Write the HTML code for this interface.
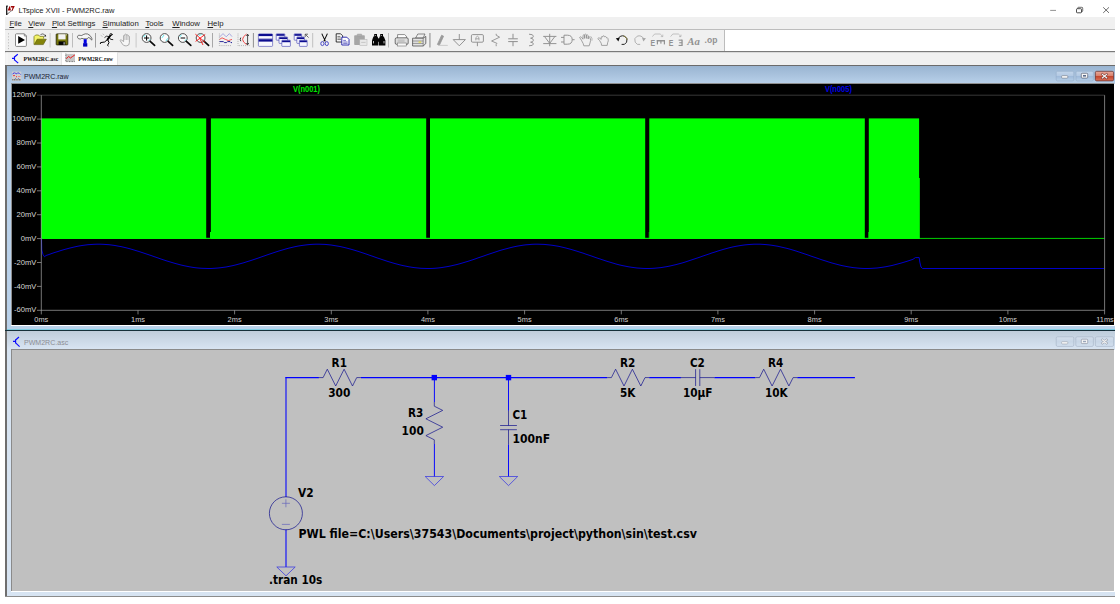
<!DOCTYPE html>
<html>
<head>
<meta charset="utf-8">
<title>LTspice XVII - PWM2RC.raw</title>
<style>
html,body{margin:0;padding:0;}
body{width:1120px;height:604px;background:#fff;position:relative;overflow:hidden;font-family:"Liberation Sans",sans-serif;}
.abs{position:absolute;}
.t{position:absolute;white-space:nowrap;line-height:1;}
#titlebar{left:0;top:0;width:1120px;height:17px;background:#fff;}
#titletext{left:18.5px;top:7px;font-size:7.55px;color:#222;}
#menubar{left:5px;top:17px;width:1110px;height:12px;background:#f0f0f0;}
#menubar span{position:absolute;top:2.8px;font-size:7.75px;color:#222;line-height:1;white-space:nowrap;}
#menubar u{text-decoration:underline;text-underline-offset:0.5px;text-decoration-thickness:0.5px;}
#tbline{left:5px;top:29px;width:1110px;height:1px;background:#bdbdbd;}
#toolbar{left:5px;top:30px;width:719px;height:21px;background:#f0f0f0;}
#tbwhite{left:725px;top:30px;width:390px;height:21px;background:#fff;}
#tbsep{left:724px;top:30px;width:1px;height:21px;background:#bcbcbc;}
#tbbottom{left:5px;top:51px;width:1110px;height:1px;background:#7a7a7a;}
#tbbottom2{left:5px;top:52px;width:1110px;height:1px;background:#d9d9d9;}
#tabbar{left:5px;top:53px;width:1110px;height:12px;background:#f0f0f0;}
#tabline{left:5px;top:65px;width:1110px;height:1px;background:#6b6b6b;}
#mdi{left:5px;top:66px;width:1110px;height:531px;background:#a0a0a0;}
.tabtxt{font-family:"Liberation Mono",monospace;font-size:5.9px;color:#333;}
.sep{position:absolute;top:33px;width:1px;height:15px;background:#b4b4b4;}
</style>
</head>
<body>
<div id="titlebar" class="abs"></div>
<div id="titletext" class="t">LTspice XVII - PWM2RC.raw</div>
<div id="menubar" class="abs">
<span style="left:4.4px"><u>F</u>ile</span>
<span style="left:23.3px"><u>V</u>iew</span>
<span style="left:46.9px"><u>P</u>lot Settings</span>
<span style="left:97.5px"><u>S</u>imulation</span>
<span style="left:140.4px"><u>T</u>ools</span>
<span style="left:167.3px"><u>W</u>indow</span>
<span style="left:202.5px"><u>H</u>elp</span>
</div>
<div id="tbline" class="abs"></div>
<div id="toolbar" class="abs"></div>
<div id="tbsep" class="abs"></div>
<div id="tbwhite" class="abs"></div>
<div id="tbbottom" class="abs"></div>
<div id="tbbottom2" class="abs"></div>
<div id="tabbar" class="abs"></div>
<div id="tabline" class="abs"></div>
<div id="mdi" class="abs"></div>

<!-- ===== Toolbar icons ===== -->
<svg class="abs" style="left:0;top:0" width="1120" height="604" viewBox="0 0 1120 604">
<!-- gripper -->
<g fill="#a8a8a8"><rect x="8" y="33.4" width="0.9" height="0.9"/><rect x="8" y="36.4" width="0.9" height="0.9"/><rect x="8" y="39.4" width="0.9" height="0.9"/><rect x="8" y="42.4" width="0.9" height="0.9"/><rect x="8" y="45.4" width="0.9" height="0.9"/><rect x="8" y="48.2" width="0.9" height="0.9"/></g>
<!-- separators -->
<g>
<rect x="49.6" y="33" width="1" height="14.5" fill="#c6c6c6"/><rect x="72" y="33" width="1" height="14.5" fill="#bdbdbd"/><rect x="95.1" y="33" width="0.9" height="14.5" fill="#969696"/><rect x="135.6" y="33" width="1" height="14.5" fill="#c8c8c8"/><rect x="212" y="33" width="0.9" height="14.5" fill="#a0a0a0"/><rect x="252.9" y="33" width="0.9" height="14.5" fill="#858585"/><rect x="312.2" y="33" width="1" height="14.5" fill="#c0c0c0"/><rect x="388" y="33" width="1" height="14.5" fill="#bcbcbc"/><rect x="429.5" y="33" width="0.9" height="14.5" fill="#7c7c7c"/>
</g>
<!-- run (page + triangle) -->
<path d="M16.4,33.8H24.4L26.4,35.9V45.4Q26.4,46.4 25.4,46.4H16.4Q15.5,46.4 15.5,45.4V34.7Q15.5,33.8 16.4,33.8Z" fill="#fff" stroke="#6a6a6a" stroke-width="0.8"/>
<path d="M24.3,33.9V36H26.3" fill="none" stroke="#555" stroke-width="0.6"/>
<path d="M18.2,36.1L25,39.9L18.2,43.7Z" fill="#000"/>
<!-- open folder -->
<path d="M34,44.4V36.6L35.6,35H38.6L39.8,36.4H43.6V38.6" fill="#f4f46a" stroke="#6b6b10" stroke-width="0.7"/>
<path d="M34.2,44.6L37.2,39.2H46.3L43.3,44.6Z" fill="#84840a" stroke="#55550a" stroke-width="0.6"/>
<path d="M40.5,34.6Q43,32.6 45.2,35.4" fill="none" stroke="#333" stroke-width="0.7"/>
<path d="M44,36.4L46.2,36.6L45.8,34.4Z" fill="#222"/>
<!-- save floppy -->
<rect x="56.2" y="33.9" width="11.6" height="11" rx="0.6" fill="#76760a" stroke="#222204" stroke-width="0.8"/>
<rect x="58.3" y="34.2" width="7.3" height="5.2" fill="#f2f2f2"/>
<rect x="58.6" y="41.4" width="6.8" height="3.5" fill="#050505"/>
<rect x="63.6" y="42.2" width="1" height="2.4" fill="#ddd"/>
<rect x="65.9" y="34.4" width="0.9" height="0.9" fill="#eee"/>
<!-- hammer -->
<path d="M77.6,36.2Q78.2,34.6 80.2,35.4Q81.8,36 83.2,34.6Q85.2,33.4 87.6,34Q90.4,35 91.8,38.2Q92.2,39.4 91.6,40.2Q90.6,37.8 88.4,37.4L87.4,38.8H83L82,38.2Q80.2,39.6 78.6,38.8Q77.2,37.8 77.6,36.2Z" fill="#f6f6f6" stroke="#3a3a3a" stroke-width="0.7"/>
<rect x="83.7" y="39.2" width="3" height="4.4" fill="#0000e8"/>
<rect x="83.1" y="43.2" width="4.2" height="3.4" fill="#0000c0"/>
<!-- running man -->
<g stroke="#000" fill="none" stroke-linecap="round">
<circle cx="111" cy="34.6" r="1.1" stroke-width="0.8"/>
<path d="M110.2,35.8L107.6,39.4" stroke-width="1.9"/>
<path d="M107.8,39.2L104.6,42L100.6,42.6L100.4,43.6" stroke-width="1"/>
<path d="M107.8,39.8L109,42.6L107.6,45.2L108.2,46" stroke-width="1"/>
<path d="M109.6,36.6L106.4,36.2L104.8,37.4" stroke-width="0.8"/>
<path d="M109.4,37.4L110.6,39.4L112.8,39.6" stroke-width="0.8"/>
</g>
<path d="M100.6,35.2L102.6,36.6 M102.6,33.8L104.2,35" stroke="#999" stroke-width="0.5" fill="none"/>
<!-- halt hand (gray) -->
<path d="M123.6,41.6V35.6Q124.2,34.6 124.9,35.6V34.6Q125.6,33.6 126.4,34.6V35Q127.2,34.2 127.9,35.2V36Q128.8,35.4 129.4,36.4V42.6Q129.4,45.8 126.6,45.8H125.2Q123.4,45.8 122.4,44L120,40.4Q120.6,39.4 121.8,40.2Z" fill="#f6f6f6" stroke="#a2a2a2" stroke-width="0.9"/>
<path d="M124.9,35.6V40 M126.4,35V40 M127.9,36V40" stroke="#a8a8a8" stroke-width="0.7" fill="none"/>
<!-- magnifiers -->
<g id="mags">
<g fill="#fdfdfd" stroke="#3c3c3c" stroke-width="0.9"><circle cx="146.6" cy="38" r="4.4"/><circle cx="164.6" cy="38" r="4.4"/><circle cx="182.8" cy="38" r="4.4"/><circle cx="200.6" cy="38" r="4.4"/></g>
<g stroke="#58e8f0" stroke-width="1" fill="none"><path d="M143.4,37L145.4,34.8 M148.6,40.8L150.2,39.2 M162,37.8L164,35 M166,41L167.6,38.4 M179.6,37L181.6,34.8 M184.8,40.8L186.4,39.2 M198.8,35.4L201.4,34.6 M201.6,40.6L203.6,39.6"/></g>
<g stroke="#0a0a0a" stroke-width="1.7" stroke-linecap="round" fill="none"><path d="M150.2,41.4L154.6,45.4 M168.2,41.4L172.6,45.4 M186.4,41.4L190.8,45.4 M204.2,41.4L208.6,45.4"/></g>
<path d="M144,38H149.2 M146.6,35.4V40.6 M180.6,38H185.2" stroke="#000" stroke-width="1" fill="none"/>
<path d="M195.4,34.2L205,42.2 M205.2,34.4L195.6,41.4 M200,39L203,45" stroke="#ff1010" stroke-width="0.9" fill="none"/>
</g>
<!-- autorange icon -->
<g fill="none">
<path d="M219.4,33.6V45.6H232" stroke="#777" stroke-width="0.6" stroke-dasharray="0.8,1.1"/>
<path d="M219.6,37L223,33.6L226.2,36.8L229.4,33.6L232,36.6" stroke="#8a8ad8" stroke-width="0.7"/>
<path d="M219.6,39.4L222,37.8L225.4,39.4L228.4,40.6L232,39.4" stroke="#f03030" stroke-width="0.8"/>
<path d="M219.6,41.6H223.4L224.4,42.6H226.6L227.6,41.6H230L231,42.6H232" stroke="#10108c" stroke-width="0.9"/>
</g>
<!-- second plot icon -->
<g fill="none">
<path d="M238,33.6V45.6H250" stroke="#777" stroke-width="0.6" stroke-dasharray="0.8,1.1"/>
<path d="M246.6,34Q238.6,39.4 246.6,44.6" stroke="#f02020" stroke-width="0.8"/>
<path d="M240.8,37.6Q239.6,39.4 240.8,41.2" stroke="#222" stroke-width="0.9"/>
<path d="M247.6,34.4V44.4 M246.4,36L247.6,34.2L248.8,36 M246.4,43L247.6,44.8L248.8,43" stroke="#222" stroke-width="0.8"/>
</g>
<!-- tile windows -->
<g>
<rect x="258.4" y="33.8" width="14.2" height="12.6" rx="0.8" fill="#f8f8ff" stroke="#4848b0" stroke-width="0.6"/>
<rect x="258.6" y="34" width="13.8" height="2.1" fill="#0c0c90"/>
<rect x="258.6" y="39.2" width="13.8" height="2.4" fill="#0c0c90"/>
<rect x="258.4" y="38.6" width="14.2" height="0.5" fill="#4848b0"/>
</g>
<!-- cascade -->
<g stroke="#3c3cb0" stroke-width="0.6" fill="#f6f6ff">
<rect x="276.2" y="33.8" width="8.6" height="6.4" rx="0.5"/>
<rect x="279" y="37" width="8.6" height="6.4" rx="0.5"/>
<rect x="281.8" y="40.2" width="8.6" height="6.2" rx="0.5"/>
</g>
<g fill="#0c0c90"><rect x="276.5" y="34.1" width="8" height="1.7"/><rect x="279.3" y="37.3" width="8" height="1.7"/><rect x="282.1" y="40.5" width="8" height="1.7"/></g>
<g stroke="#3c3cb0" stroke-width="0.6" fill="#f6f6ff">
<rect x="294.2" y="33.8" width="7.4" height="6.4" rx="0.5"/>
<rect x="296.8" y="37" width="7.6" height="6.4" rx="0.5"/>
<rect x="299.4" y="40.2" width="7.8" height="6.2" rx="0.5"/>
</g>
<g fill="#0c0c90"><rect x="294.5" y="34.1" width="6.8" height="1.7"/><rect x="297.1" y="37.3" width="7" height="1.7"/><rect x="299.7" y="40.5" width="7.2" height="1.7"/></g>
<path d="M305.2,34.2H308 M305.2,34.2V37 M305.4,34.4L308.6,37.6" stroke="#333" stroke-width="0.7" fill="none"/>
<!-- scissors -->
<path d="M321.8,33.6L325.4,41.4 M327.4,33.6L323.8,41.4" stroke="#0c0c0c" stroke-width="1.05" fill="none"/>
<ellipse cx="322.4" cy="43.6" rx="1.6" ry="2" fill="none" stroke="#3838c0" stroke-width="0.9"/>
<ellipse cx="326.8" cy="43.6" rx="1.6" ry="2" fill="none" stroke="#3838c0" stroke-width="0.9"/>
<!-- copy -->
<path d="M336.2,33.8H340.6L342.6,35.8V42H336.2Z" fill="#fff" stroke="#111" stroke-width="0.85"/>
<path d="M337.4,36.4H340.4 M337.4,38H341.2 M337.4,39.6H341.2" stroke="#222" stroke-width="0.6"/>
<path d="M341.8,37.2H346.8L349,39.4V45H341.8Z" fill="#fff" stroke="#1c1ca8" stroke-width="0.9"/>
<path d="M343.2,40.4H346 M343.2,42H347.6 M343.2,43.4H347.6" stroke="#1c1ca8" stroke-width="0.6"/>
<!-- paste (gray) -->
<rect x="354.2" y="35.2" width="10.6" height="9.8" rx="0.8" fill="#a6a6a6"/>
<rect x="357.2" y="34" width="4.6" height="2" rx="0.6" fill="#b4b4b4" stroke="#999" stroke-width="0.4"/>
<rect x="359.8" y="39.4" width="7.2" height="6" fill="#e8e8e8" stroke="#b0b0b0" stroke-width="0.5"/>
<path d="M361.2,42.4H365.6" stroke="#b0b0b0" stroke-width="0.6"/>
<!-- binoculars -->
<g fill="#050505">
<rect x="374.2" y="34" width="2.8" height="3"/><rect x="380.2" y="34" width="2.8" height="3"/>
<path d="M373.4,36.6H377.6L378.4,39V45.6H372L372,40.6Z"/>
<path d="M379.6,36.6H383.8L385.4,40.6V45.6H379L379,39Z"/>
<rect x="377.6" y="38.4" width="2.2" height="3.4"/>
</g>
<g fill="#e8e8e8"><rect x="373.2" y="41" width="0.8" height="2.4"/><rect x="383.6" y="41" width="0.8" height="2.4"/><rect x="375.4" y="35" width="0.6" height="1"/><rect x="381.4" y="35" width="0.6" height="1"/></g>
<!-- printer 1 -->
<g>
<path d="M397.6,38V34.6H404.6L406.4,36.2V38" fill="#fff" stroke="#444" stroke-width="0.6"/>
<rect x="395.2" y="37.8" width="13" height="6.6" rx="1.4" fill="#dedede" stroke="#3c3c3c" stroke-width="0.7"/>
<rect x="397.2" y="43" width="9" height="3" fill="#f8f8f8" stroke="#555" stroke-width="0.5"/>
<rect x="397.6" y="39.4" width="7" height="2.6" fill="#c4c4c4"/>
</g>
<!-- printer 2 -->
<g>
<path d="M415.6,38L417.8,34H425L423,38Z" fill="#f0f0f0" stroke="#444" stroke-width="0.6"/>
<path d="M412.6,38.2H423.2L425.8,36.4V43.6L423.2,46H412.6Z" fill="#e4e4e4" stroke="#3c3c3c" stroke-width="0.7"/>
<path d="M412.6,41H423.2 M412.6,43.4H423.2 M423.2,38.2V46" stroke="#444" stroke-width="0.5" fill="none"/>
<rect x="418.6" y="41.6" width="2.6" height="1" fill="#e8e020"/>
</g>
<!-- gray schematic tool icons -->
<g stroke="#8e8e8e" fill="none" stroke-width="0.95">
<!-- pencil -->
<path d="M437.4,44.4L441.6,35.2L443.6,36.2L439.4,45.2Z" fill="#9a9a9a" stroke="#9a9a9a" stroke-width="0.8"/>
<path d="M438,45.4H447.8" stroke="#c6c6c6" stroke-width="0.9"/>
<!-- ground -->
<path d="M459.3,34V39.6 M453.2,39.6H465.4L459.3,45.8Z"/>
<!-- label -->
<rect x="471.4" y="34.6" width="12" height="7.6" rx="1.2"/>
<path d="M477.4,42.2V46.2"/>
<path d="M475.8,40.4V37.6L477.4,36.2L479,37.6V40.4 M475.8,38.8H479" stroke-width="0.7"/>
<!-- resistor -->
<path d="M496.2,33.8V35.2L499.6,37.2L491.6,41L497,43.4L496.2,44.4V46.2" stroke-width="0.9"/>
<!-- capacitor -->
<path d="M513,33.8V38.6 M508.2,38.8H517.8 M508.2,41.6H517.8 M513,41.8V46.2" stroke-width="1"/>
<!-- inductor -->
<path d="M529,34.2Q533.4,34.2 533.4,36.2Q533.4,38 530.6,38.2Q533.4,38.4 533.4,40.2Q533.4,42 530.6,42.2Q533.4,42.4 533.4,44Q533.4,45.8 529,45.8" stroke-width="0.95"/>
<!-- diode -->
<path d="M549.7,33.8V46.2 M543.2,36.4H556.4 M544.6,36.6L549.7,43.4L554.8,36.6 M543.2,43.6H556.4" stroke-width="0.95"/>
<!-- gate -->
<path d="M561,37.4H564 M561,42H564 M564,35.2H567.4Q572.2,35.2 572.2,39.7Q572.2,44.2 567.4,44.2H564Z M572.2,39.7H574.6" stroke-width="0.95"/>
<!-- hand move (open hand) -->
<path d="M581.4,40.2L579.6,37.4Q580.4,36.2 581.6,37.4L583,39.2V35.4Q583.8,34.2 584.6,35.4V38.4V34.6Q585.6,33.6 586.4,34.8V38.4V35.2Q587.4,34.4 588.2,35.6V39V36.8Q589.2,36.2 589.8,37.2Q591.4,40.4 590,43L589.2,45.8H583.8L583.2,43.6Z" stroke-width="0.8"/>
<path d="M590.6,36.2Q592.6,38 592,40.6" stroke-width="0.6"/>
<!-- hand drag (closed) -->
<path d="M599.6,40.6L597.8,38.6Q598.6,37.4 599.8,38.2L601.2,39.4V37Q602,36 602.8,37V36.2Q603.8,35.2 604.6,36.4V36.8Q605.6,36 606.4,37.2V37.8Q607.6,37.4 608,38.6Q608.8,41 607.6,42.8L607.2,45.4H601.6L601.2,43.2Z" stroke-width="0.8"/>
</g>
<!-- undo (black) -->
<path d="M617.6,39.2Q620.6,34.6 624.6,36.2Q628.4,38.2 626.6,42.2Q624.8,45.4 621.6,44.4" fill="none" stroke="#1a1a1a" stroke-width="0.95"/>
<path d="M623.2,35.8Q626.8,36.6 627.2,40" fill="none" stroke="#8a7a10" stroke-width="0.5"/>
<path d="M615.8,38.2L619.8,37.8L618.4,41.4Z" fill="#111"/>
<!-- redo (gray) -->
<path d="M644.2,39.2Q641.2,34.6 637.2,36.2Q633.4,38.2 635.2,42.2Q637,45.4 640.2,44.4" fill="none" stroke="#a8a8a8" stroke-width="0.9"/>
<path d="M646,38.2L642,37.8L643.4,41.4Z" fill="#a8a8a8"/>
<!-- rotate / mirror arcs -->
<g stroke="#a2a2a2" stroke-width="0.6" fill="none">
<path d="M652.4,36.6L654.6,34H660.2L662.6,36.4 M662.8,34.6V36.6H660.8"/>
<path d="M670.6,36.6L672.8,34H678.4L680.8,36.4 M681,34.6V36.6H679"/>
</g>
<g fill="#929292">
<!-- rotated E (m shape) -->
<rect x="656.8" y="40" width="8.2" height="1.5"/><rect x="656.8" y="40" width="1.2" height="4.4"/><rect x="660.3" y="40" width="1.2" height="3.6"/><rect x="663.8" y="40" width="1.2" height="4.4"/>
<!-- mirrored E -->
<rect x="681.4" y="39.6" width="1.3" height="6.4"/><rect x="678.6" y="39.6" width="3.4" height="1.1"/><rect x="679.2" y="42.2" width="2.8" height="1.1"/><rect x="678.6" y="44.9" width="3.4" height="1.1"/>
</g>
<g font-family="Liberation Sans, sans-serif" fill="#929292">
<text x="650.6" y="46" font-size="8.6" font-weight="bold" textLength="4.6" lengthAdjust="spacingAndGlyphs">E</text>
<text x="668.8" y="46" font-size="8.6" font-weight="bold" textLength="4.6" lengthAdjust="spacingAndGlyphs">E</text>
<text x="687.2" y="45" font-size="10.2" font-style="italic" font-family="Liberation Serif, serif" font-weight="bold" textLength="12.6" lengthAdjust="spacingAndGlyphs">Aa</text>
<text x="704.6" y="43.3" font-size="8.4" font-weight="bold" textLength="12.8" lengthAdjust="spacingAndGlyphs">.op</text>
</g>
</svg>


<!-- ===== title icon + window controls ===== -->
<svg class="abs" style="left:0;top:0" width="1120" height="70" viewBox="0 0 1120 70">
<path d="M6.7,6V14.9 M6.3,6.1H7.8" stroke="#151515" stroke-width="1.25" fill="none"/><path d="M7,14.3L13,9.6" stroke="#222" stroke-width="0.9" stroke-dasharray="1.1,0.5" fill="none"/>
<path d="M9.4,6.2L7.7,10.5H11L9.9,6.2Z M10.8,6H14.8L12.6,10.4L11.6,10.4L12.6,7.4H10.8Z" fill="#a00606"/>
<path d="M1050.2,10.4H1056" stroke="#666" stroke-width="0.7"/>
<rect x="1077.7" y="7.3" width="5" height="4.3" rx="0.8" fill="none" stroke="#333" stroke-width="0.7"/>
<rect x="1076.5" y="8.7" width="5" height="4.1" rx="0.8" fill="#fff" stroke="#222" stroke-width="0.8"/>
<path d="M1103.2,7.3L1109,12.9 M1109,7.3L1103.2,12.9" stroke="#333" stroke-width="0.7"/>
<!-- tabs -->
<rect x="6.5" y="52.4" width="55" height="12.6" fill="#f2f2f2"/>
<rect x="6.5" y="52.4" width="0.8" height="12.6" fill="#fafafa"/>
<rect x="61.8" y="52.4" width="55.4" height="12.6" fill="#fff"/>
<rect x="117.2" y="53" width="0.7" height="12" fill="#d8d8d8"/>
<rect x="61.3" y="53" width="0.6" height="12" fill="#dcdcdc"/>
<!-- tab1 icon -->
<path d="M12,58.4H14.5 M14.5,56.2V60.6 M14.5,57L17.8,54.2 M14.5,59.8L18.2,63.2" stroke="#0a0aff" stroke-width="1.15" fill="none"/>
<!-- tab2 icon -->
<rect x="65.8" y="53.8" width="9.2" height="7.6" fill="#c6c6c6"/>
<path d="M65.8,53.6V61.6H75.2" stroke="#333" stroke-width="0.7" fill="none" stroke-dasharray="0.9,0.7"/>
<path d="M66.4,58.8L68.6,56.4L70.4,58L72.4,56.6L74.8,55" stroke="#f01818" stroke-width="1" fill="none"/>
<g font-family="Liberation Serif, serif" font-size="6.7" font-weight="bold" fill="#0c0c0c">
<text x="23.4" y="61.4" textLength="34.8" lengthAdjust="spacingAndGlyphs">PWM2RC.asc</text>
<text x="78.2" y="61.4" textLength="34.8" lengthAdjust="spacingAndGlyphs">PWM2RC.raw</text>
</g>
</svg>


<!-- ===== Window 1 : waveform ===== -->
<div class="abs" style="left:5px;top:66px;width:1.5px;height:531px;background:#6e6e6e"></div>
<div class="abs" style="left:6.5px;top:66px;width:1108.5px;height:18px;background:linear-gradient(#99b4d1,#b9d1ea)"></div>
<div class="abs" style="left:6.5px;top:84px;width:1108.5px;height:246px;background:#b9d1ea"></div>
<div class="abs" style="left:6.5px;top:329.2px;width:1108.5px;height:0.9px;background:#7fcde2"></div>
<div class="abs" style="left:5px;top:330px;width:1110px;height:1.1px;background:#15303a"></div>
<div class="abs" style="left:11px;top:83.4px;width:1103px;height:242px;background:#8e8e8e"></div>
<div class="abs" style="left:11px;top:325px;width:1103px;height:1px;background:#fff"></div>
<div class="abs" style="left:12px;top:84.3px;width:1102px;height:240.7px;background:#000"></div>
<div class="abs" style="left:1114px;top:84px;width:1.2px;height:242px;background:#fff"></div>
<div class="t" style="left:24px;top:72.9px;font-size:7.7px;transform:scaleX(0.915);transform-origin:left top;color:#1c1c30">PWM2RC.raw</div>

<svg class="abs" style="left:0;top:60px" width="40" height="30" viewBox="0 60 40 30">
<rect x="12" y="71.6" width="9.2" height="9.2" fill="#cfcfcf"/>
<path d="M12.6,74.2Q14.4,71.6 16.2,74Q18.2,71.8 20.6,74.4" stroke="#1010f0" stroke-width="1" fill="none" stroke-dasharray="1.6,0.6"/>
<rect x="13" y="75.2" width="2" height="0.9" fill="#f03030"/><rect x="16" y="76.2" width="1" height="1" fill="#f03030"/><rect x="18" y="76" width="2.4" height="0.9" fill="#f08080"/>
<rect x="15" y="78" width="0.8" height="0.8" fill="#5050c0"/><rect x="18" y="78" width="0.8" height="0.8" fill="#5050c0"/>
<path d="M12.2,79.8H21" stroke="#444" stroke-width="0.9" stroke-dasharray="1.2,0.5"/>
</svg>


<svg class="abs" style="left:1040px;top:66px" width="80" height="20" viewBox="1040 66 80 20">
<defs>
<linearGradient id="gb" x1="0" y1="0" x2="0" y2="1"><stop offset="0" stop-color="#c2d5ea"/><stop offset="0.48" stop-color="#b3c9e3"/><stop offset="0.52" stop-color="#9fbada"/><stop offset="1" stop-color="#b6cfe8"/></linearGradient>
<linearGradient id="gr" x1="0" y1="0" x2="0" y2="1"><stop offset="0" stop-color="#eaa99a"/><stop offset="0.45" stop-color="#d9826e"/><stop offset="0.52" stop-color="#c4452c"/><stop offset="1" stop-color="#d9735c"/></linearGradient>
</defs>
<rect x="1056.2" y="71.3" width="17.6" height="9.6" rx="1.4" fill="url(#gb)" stroke="#8fa6c2" stroke-width="0.5"/>
<rect x="1076" y="71.3" width="17.4" height="9.6" rx="1.4" fill="url(#gb)" stroke="#8fa6c2" stroke-width="0.5"/>
<rect x="1095.3" y="71.3" width="18.3" height="9.6" rx="1.4" fill="url(#gr)" stroke="#5c2626" stroke-width="0.7"/>
<rect x="1061.6" y="75.6" width="6.2" height="2.6" rx="0.9" fill="#f6f6f6" stroke="#6d7788" stroke-width="0.6"/>
<rect x="1081.3" y="73.3" width="6.4" height="4.8" rx="0.9" fill="#f6f6f6" stroke="#5a6272" stroke-width="0.7"/>
<rect x="1083" y="75" width="3" height="1.6" fill="#5a6a8a"/>
<path d="M1102.4,74.4L1106.6,77.8 M1106.6,74.4L1102.4,77.8" stroke="#7a3a34" stroke-width="2.3" stroke-linecap="square"/>
<path d="M1102.4,74.4L1106.6,77.8 M1106.6,74.4L1102.4,77.8" stroke="#f4f4f4" stroke-width="1.2" stroke-linecap="square"/>
</svg>

<svg class="abs" style="left:0;top:0" width="1120" height="604" viewBox="0 0 1120 604">
<g fill="#00ff00">
<rect x="41" y="118.4" width="165.2" height="120.5"/>
<rect x="210.9" y="118.4" width="215.3" height="120.5"/>
<rect x="430" y="118.4" width="215.2" height="120.5"/>
<rect x="649.3" y="118.4" width="215.5" height="120.5"/>
<rect x="868.8" y="118.4" width="50.3" height="120.5"/>
<rect x="919" y="178" width="0.8" height="60.9"/>
<rect x="41" y="237.8" width="879" height="1.1"/>
<rect x="210" y="232" width="1" height="6"/>
<rect x="648.8" y="232" width="0.6" height="6"/>
<rect x="868.3" y="232" width="0.6" height="6"/>
</g>
<rect x="919.8" y="237.9" width="184.6" height="1" fill="#00d000"/>
<path d="M41.5,238.5 L41.8,250.0 L43.0,254.5 L44.5,256.8 L46.0,255.5 L49.0,254.5 L52.0,253.4 L55.0,252.4 L58.0,251.5 L61.0,250.5 L64.0,249.6 L67.0,248.8 L70.0,248.0 L73.0,247.3 L76.0,246.6 L79.0,246.0 L82.0,245.5 L85.0,245.1 L88.0,244.7 L91.0,244.5 L94.0,244.3 L97.0,244.2 L100.0,244.2 L103.0,244.3 L106.0,244.5 L109.0,244.7 L112.0,245.1 L115.0,245.5 L118.0,246.1 L121.0,246.6 L124.0,247.3 L127.0,248.0 L130.0,248.8 L133.0,249.7 L136.0,250.6 L139.0,251.5 L142.0,252.5 L145.0,253.5 L148.0,254.5 L151.0,255.5 L154.0,256.6 L157.0,257.6 L160.0,258.7 L163.0,259.7 L166.0,260.7 L169.0,261.6 L172.0,262.5 L175.0,263.4 L178.0,264.2 L181.0,265.0 L184.0,265.7 L187.0,266.3 L190.0,266.9 L193.0,267.4 L196.0,267.8 L199.0,268.1 L202.0,268.3 L205.0,268.4 L208.0,268.5 L211.0,268.5 L214.0,268.3 L217.0,268.1 L220.0,267.8 L223.0,267.4 L226.0,267.0 L229.0,266.4 L232.0,265.8 L235.0,265.1 L238.0,264.3 L241.0,263.5 L244.0,262.7 L247.0,261.7 L250.0,260.8 L253.0,259.8 L256.0,258.8 L259.0,257.8 L262.0,256.7 L265.0,255.7 L268.0,254.6 L271.0,253.6 L274.0,252.6 L277.0,251.6 L280.0,250.7 L283.0,249.8 L286.0,248.9 L289.0,248.1 L292.0,247.4 L295.0,246.7 L298.0,246.1 L301.0,245.6 L304.0,245.2 L307.0,244.8 L310.0,244.5 L313.0,244.3 L316.0,244.2 L319.0,244.2 L322.0,244.3 L325.0,244.4 L328.0,244.7 L331.0,245.0 L334.0,245.5 L337.0,246.0 L340.0,246.5 L343.0,247.2 L346.0,247.9 L349.0,248.7 L352.0,249.5 L355.0,250.4 L358.0,251.3 L361.0,252.3 L364.0,253.3 L367.0,254.3 L370.0,255.4 L373.0,256.4 L376.0,257.5 L379.0,258.5 L382.0,259.5 L385.0,260.5 L388.0,261.5 L391.0,262.4 L394.0,263.3 L397.0,264.1 L400.0,264.9 L403.0,265.6 L406.0,266.2 L409.0,266.8 L412.0,267.3 L415.0,267.7 L418.0,268.0 L421.0,268.3 L424.0,268.4 L427.0,268.5 L430.0,268.5 L433.0,268.4 L436.0,268.2 L439.0,267.9 L442.0,267.5 L445.0,267.0 L448.0,266.5 L451.0,265.9 L454.0,265.2 L457.0,264.5 L460.0,263.7 L463.0,262.8 L466.0,261.9 L469.0,261.0 L472.0,260.0 L475.0,259.0 L478.0,257.9 L481.0,256.9 L484.0,255.9 L487.0,254.8 L490.0,253.8 L493.0,252.8 L496.0,251.8 L499.0,250.8 L502.0,249.9 L505.0,249.1 L508.0,248.3 L511.0,247.5 L514.0,246.8 L517.0,246.2 L520.0,245.7 L523.0,245.2 L526.0,244.8 L529.0,244.6 L532.0,244.3 L535.0,244.2 L538.0,244.2 L541.0,244.3 L544.0,244.4 L547.0,244.7 L550.0,245.0 L553.0,245.4 L556.0,245.9 L559.0,246.4 L562.0,247.1 L565.0,247.8 L568.0,248.6 L571.0,249.4 L574.0,250.3 L577.0,251.2 L580.0,252.2 L583.0,253.1 L586.0,254.2 L589.0,255.2 L592.0,256.2 L595.0,257.3 L598.0,258.3 L601.0,259.3 L604.0,260.3 L607.0,261.3 L610.0,262.2 L613.0,263.1 L616.0,264.0 L619.0,264.8 L622.0,265.5 L625.0,266.1 L628.0,266.7 L631.0,267.2 L634.0,267.6 L637.0,268.0 L640.0,268.2 L643.0,268.4 L646.0,268.5 L649.0,268.5 L652.0,268.4 L655.0,268.2 L658.0,267.9 L661.0,267.6 L664.0,267.1 L667.0,266.6 L670.0,266.0 L673.0,265.3 L676.0,264.6 L679.0,263.8 L682.0,263.0 L685.0,262.1 L688.0,261.1 L691.0,260.1 L694.0,259.1 L697.0,258.1 L700.0,257.1 L703.0,256.0 L706.0,255.0 L709.0,254.0 L712.0,252.9 L715.0,252.0 L718.0,251.0 L721.0,250.1 L724.0,249.2 L727.0,248.4 L730.0,247.6 L733.0,246.9 L736.0,246.3 L739.0,245.8 L742.0,245.3 L745.0,244.9 L748.0,244.6 L751.0,244.4 L754.0,244.2 L757.0,244.2 L760.0,244.2 L763.0,244.4 L766.0,244.6 L769.0,244.9 L772.0,245.3 L775.0,245.8 L778.0,246.3 L781.0,247.0 L784.0,247.7 L787.0,248.4 L790.0,249.2 L793.0,250.1 L796.0,251.0 L799.0,252.0 L802.0,253.0 L805.0,254.0 L808.0,255.0 L811.0,256.1 L814.0,257.1 L817.0,258.1 L820.0,259.2 L823.0,260.2 L826.0,261.1 L829.0,262.1 L832.0,263.0 L835.0,263.8 L838.0,264.6 L841.0,265.4 L844.0,266.0 L847.0,266.6 L850.0,267.1 L853.0,267.6 L856.0,267.9 L859.0,268.2 L862.0,268.4 L865.0,268.5 L868.0,268.5 L871.0,268.4 L874.0,268.2 L877.0,268.0 L880.0,267.6 L883.0,267.2 L886.0,266.7 L889.0,266.1 L892.0,265.5 L895.0,264.7 L898.0,263.9 L901.0,263.1 L904.0,262.2 L907.0,261.3 L910.0,260.3 L913.0,259.3 L915.4,257.6 L919.2,257.6 L919.8,262.0 L921.0,267.0 L922.5,268.5 L1104.0,268.5" fill="none" stroke="#0000d4" stroke-width="0.95" stroke-linejoin="round"/>
<g stroke="#9c9c9c" stroke-width="0.75" fill="none">
<path d="M37,95.2H1104.6" stroke="#4a4a4a"/><path d="M41.3,95.2V314.4 M1104.6,95.2V314.4 M37,310.3H1104.6"/>
<path d="M37,119.1H41.3 M37,143.0H41.3 M37,166.9H41.3 M37,190.8H41.3 M37,214.7H41.3 M37,238.6H41.3 M37,262.5H41.3 M37,286.4H41.3 M138.0,310.3V314.4 M234.6,310.3V314.4 M331.3,310.3V314.4 M427.9,310.3V314.4 M524.6,310.3V314.4 M621.3,310.3V314.4 M717.9,310.3V314.4 M814.6,310.3V314.4 M911.2,310.3V314.4 M1007.9,310.3V314.4"/>
</g>
<g font-family="Liberation Sans, sans-serif" font-size="7.6" fill="#d8d8d8" text-anchor="end">
<text x="36.3" y="97.3">120mV</text>
<text x="36.3" y="121.2">100mV</text>
<text x="36.3" y="145.1">80mV</text>
<text x="36.3" y="169.0">60mV</text>
<text x="36.3" y="192.9">40mV</text>
<text x="36.3" y="216.8">20mV</text>
<text x="36.3" y="240.7">0mV</text>
<text x="36.3" y="264.6">-20mV</text>
<text x="36.3" y="288.5">-40mV</text>
<text x="36.3" y="312.4">-60mV</text>
</g>
<g font-family="Liberation Sans, sans-serif" font-size="7.4" fill="#d0d0d0" text-anchor="middle">
<text x="41.3" y="321.8">0ms</text>
<text x="138.0" y="321.8">1ms</text>
<text x="234.6" y="321.8">2ms</text>
<text x="331.3" y="321.8">3ms</text>
<text x="427.9" y="321.8">4ms</text>
<text x="524.6" y="321.8">5ms</text>
<text x="621.3" y="321.8">6ms</text>
<text x="717.9" y="321.8">7ms</text>
<text x="814.6" y="321.8">8ms</text>
<text x="911.2" y="321.8">9ms</text>
<text x="1007.9" y="321.8">10ms</text>
<text x="1113.8" y="321.8" text-anchor="end">11ms</text>
</g>
<text x="293" y="92.2" font-family="Liberation Sans, sans-serif" font-weight="bold" font-size="8.7" fill="#00e800" textLength="27" lengthAdjust="spacingAndGlyphs">V(n001)</text>
<text x="824.9" y="92.2" font-family="Liberation Sans, sans-serif" font-weight="bold" font-size="8.7" fill="#0000e8" textLength="27" lengthAdjust="spacingAndGlyphs">V(n005)</text>
</svg>


<!-- ===== Window 2 : schematic ===== -->
<div class="abs" style="left:6.5px;top:331px;width:1108.5px;height:19px;background:linear-gradient(#bfcddb,#d9e5f3)"></div>
<div class="abs" style="left:6.5px;top:349.5px;width:1108.5px;height:246.5px;background:#d7e4f2"></div>
<div class="abs" style="left:5px;top:596px;width:1110px;height:1px;background:#8c8c8c"></div>
<div class="abs" style="left:11px;top:349.2px;width:1103px;height:242px;background:#8a8a8a"></div>
<div class="abs" style="left:11px;top:591px;width:1103px;height:1px;background:#fff"></div>
<div class="abs" style="left:12px;top:350px;width:1102px;height:241px;background:#c0c0c0"></div>
<div class="abs" style="left:1114px;top:349.5px;width:1.2px;height:242.5px;background:#fff"></div>
<div class="t" style="left:24px;top:339.2px;font-size:7.7px;transform:scaleX(0.915);transform-origin:left top;color:#8c8c94">PWM2RC.asc</div>

<svg class="abs" style="left:0;top:330px" width="40" height="24" viewBox="0 330 40 24">
<path d="M13,341.4H15.6 M15.6,339.2V343.6 M15.6,340L19,337 M15.6,342.8L19.6,346.6" stroke="#0a0aff" stroke-width="1.15" fill="none"/>
</svg>


<svg class="abs" style="left:1040px;top:331px" width="80" height="20" viewBox="1040 331 80 20">
<defs>
<linearGradient id="gi" x1="0" y1="0" x2="0" y2="1"><stop offset="0" stop-color="#d3deeb"/><stop offset="0.5" stop-color="#c8d6e6"/><stop offset="1" stop-color="#d2dfee"/></linearGradient>
</defs>
<rect x="1056.2" y="336.8" width="17.6" height="9.6" rx="1.4" fill="url(#gi)" stroke="#a4b1c4" stroke-width="0.6"/>
<rect x="1075.8" y="336.8" width="17.6" height="9.6" rx="1.4" fill="url(#gi)" stroke="#a4b1c4" stroke-width="0.6"/>
<rect x="1095.4" y="336.8" width="18.2" height="9.6" rx="1.4" fill="url(#gi)" stroke="#a4b1c4" stroke-width="0.6"/>
<rect x="1061.6" y="341.6" width="6.2" height="2.4" rx="0.8" fill="#f4f4f4" stroke="#9aa2b0" stroke-width="0.6"/>
<rect x="1081.3" y="339.2" width="6.4" height="4.4" rx="0.8" fill="#f4f4f4" stroke="#8f97a6" stroke-width="0.7"/>
<rect x="1083" y="340.8" width="3" height="1.4" fill="#9aa6ba"/>
<path d="M1102.4,339.8L1106.6,343.2 M1106.6,339.8L1102.4,343.2" stroke="#98a0ae" stroke-width="2.2" stroke-linecap="square"/>
<path d="M1102.4,339.8L1106.6,343.2 M1106.6,339.8L1102.4,343.2" stroke="#f2f2f2" stroke-width="1.1" stroke-linecap="square"/>
</svg>

<svg class="abs" style="left:0;top:0" width="1120" height="604" viewBox="0 0 1120 604">
<g stroke="#0000ff" fill="none" stroke-linecap="butt">
<path stroke-width="1.05" d="M285.5,377.6H318.9 M360.9,377.6H607.2 M649.2,377.6H680.9 M714.4,377.6H755.3 M797.3,377.6H854.9"/>
<path stroke-width="1.05" d="M286,377.1V497 M286,529.6V567"/><path stroke-width="0.95" d="M434.4,377.6V402 M434.4,444V476.5 M508.5,377.6V410.8 M508.5,444.4V476.5"/>
</g>
<g fill="#0000ff"><rect x="431.6" y="374.9" width="5.4" height="5.4"/><rect x="505.8" y="374.9" width="5.4" height="5.4"/></g>
<g stroke="#10108c" stroke-width="0.7" fill="none" stroke-linejoin="miter">
<!-- R1 -->
<path d="M318.9,377.6H323.1L327.3,369.2L335.7,386L344.1,369.2L352.5,386L356.7,377.6H360.9"/>
<!-- R2 -->
<path d="M607.2,377.6H611.4L615.6,369.2L624,386L632.4,369.2L640.8,386L645,377.6H649.2"/>
<!-- R4 -->
<path d="M755.3,377.6H759.5L763.7,369.2L772.1,386L780.5,369.2L788.9,386L793.1,377.6H797.3"/>
<!-- R3 -->
<path d="M434.3,402V406.2L442.7,410.4L425.9,418.8L442.7,427.2L425.9,435.6L434.3,439.8V444"/>
<!-- C1 -->
<path d="M508.5,410.8V425.5 M500.1,425.5H516.9 M500.1,429.7H516.9 M508.5,429.7V444.4"/>
<!-- C2 -->
<path d="M680.9,377.6H695.6 M695.6,369.2V386 M699.8,369.2V386 M699.8,377.6H714.4"/>
<!-- grounds -->
<path d="M425.2,476.5H443.6L434.4,485.6Z M499.3,476.5H517.7L508.5,485.6Z M276.8,567H295.2L286,575.8Z" stroke="#2c2ce4"/>
<!-- V2 -->
<circle cx="285.9" cy="513.3" r="16.5"/>
<path d="M281.9,503.3H289.9 M285.9,499.3V507.3 M281.9,524.4H289.9" stroke="#6464bc"/>
</g>
<g font-family="'DejaVu Sans Condensed','DejaVu Sans','Liberation Sans',sans-serif" font-weight="bold" font-size="11.4" fill="#000">
<text x="331.6" y="366.8" textLength="15.3" lengthAdjust="spacingAndGlyphs">R1</text>
<text x="328.2" y="396.9" textLength="22.2" lengthAdjust="spacingAndGlyphs">300</text>
<text x="407.9" y="416.7" textLength="15.3" lengthAdjust="spacingAndGlyphs">R3</text>
<text x="401.6" y="435.1" textLength="22.2" lengthAdjust="spacingAndGlyphs">100</text>
<text x="512.4" y="418.9" textLength="14.9" lengthAdjust="spacingAndGlyphs">C1</text>
<text x="512.6" y="443.4" textLength="37.6" lengthAdjust="spacingAndGlyphs">100nF</text>
<text x="619.9" y="366.7" textLength="15.3" lengthAdjust="spacingAndGlyphs">R2</text>
<text x="619.9" y="396.7" textLength="15.4" lengthAdjust="spacingAndGlyphs">5K</text>
<text x="689.9" y="366.7" textLength="14.9" lengthAdjust="spacingAndGlyphs">C2</text>
<text x="682.9" y="396.7" textLength="29.6" lengthAdjust="spacingAndGlyphs">10µF</text>
<text x="767.9" y="366.7" textLength="15.3" lengthAdjust="spacingAndGlyphs">R4</text>
<text x="764.9" y="396.7" textLength="22.7" lengthAdjust="spacingAndGlyphs">10K</text>
<text x="298.1" y="496.8" textLength="15.6" lengthAdjust="spacingAndGlyphs">V2</text>
<text x="298.5" y="537.8" textLength="398.4" lengthAdjust="spacingAndGlyphs">PWL file=C:\Users\37543\Documents\project\python\sin\test.csv</text>
<text x="269.1" y="583.6" textLength="53.2" lengthAdjust="spacingAndGlyphs">.tran 10s</text>
</g>
</svg>

</body>
</html>
